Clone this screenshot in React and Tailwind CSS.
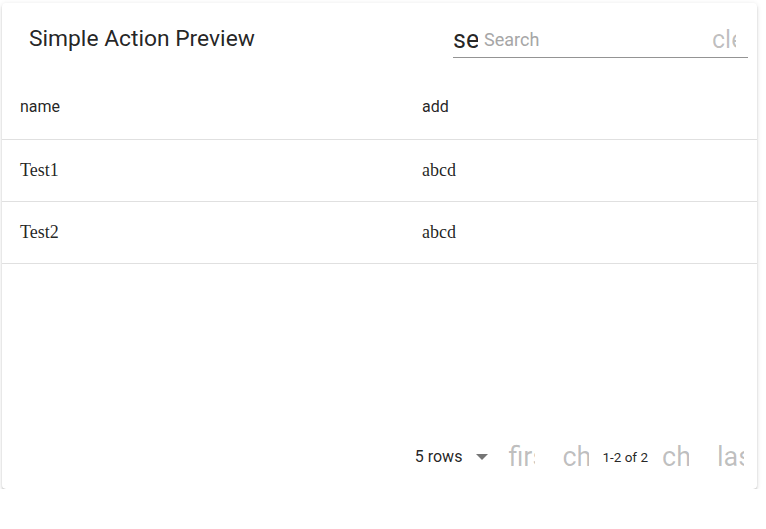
import React from 'react'

// rows shown in the preview table
const rows = [
  { name: "Test1", add: "abcd" },
  { name: "Test2", add: "abcd" },
]

// icon-font fallback: the ligature name shows, clipped to a 1em box
function LigIcon({ name, className = "" }) {
  return (
    <span className={`inline-block overflow-hidden whitespace-nowrap ${className}`}>
      {name}
    </span>
  )
}

export default function App() {
  return (
    <div className="pl-[2px] pt-[3px] font-['Roboto',sans-serif]">
      <div className="w-[755px] h-[486px] bg-white rounded-[4px] shadow-[0_3px_1px_-2px_rgba(0,0,0,0.25),0_2px_2px_0_rgba(0,0,0,0.16),0_1px_5px_0_rgba(0,0,0,0.12)] flex flex-col">

        {/* toolbar */}
        <div className="h-[72px] flex items-center pl-[27px] pr-[9px]">
          <h2 className="text-[22.8px] text-[rgba(0,0,0,0.87)] flex-1">Simple Action Preview</h2>
          <div className="w-[295px] h-[36px] flex items-center border-b border-[rgba(0,0,0,0.42)] mt-[2px]">
            <LigIcon name="search" className="w-[25px] h-[27px] text-[25px] leading-[27px] text-[rgba(0,0,0,0.87)]" />
            <span className="ml-[6px] text-[18px] text-[#a6a6a6] flex-1">Search</span>
            <LigIcon name="clear" className="w-[24px] h-[27px] text-[25px] leading-[27px] text-[rgba(0,0,0,0.26)] mr-[12px]" />
          </div>
        </div>

        {/* header */}
        <div className="grid grid-cols-[402px_1fr] h-[65px] items-center border-b border-[#e0e0e0] text-[16px] text-[rgba(0,0,0,0.87)]">
          <div className="pl-[18px]">name</div>
          <div className="pl-[18px]">add</div>
        </div>

        {/* body */}
        {rows.map((r, i) => (
          <div key={i} className="grid grid-cols-[402px_1fr] h-[62px] items-center border-b border-[#e0e0e0] font-['Liberation_Serif',serif] text-[18px] text-[rgba(0,0,0,0.87)]">
            <div className="pl-[18px]">{r.name}</div>
            <div className="pl-[18px]">{r.add}</div>
          </div>
        ))}

        <div className="flex-1" />

        {/* pagination */}
        <div className="h-[64px] mt-[2px] flex items-center justify-end pr-[13px]">
          <span className="text-[16px] text-[rgba(0,0,0,0.87)]">5 rows</span>
          <svg className="ml-[14px]" width="12" height="6" viewBox="0 0 10 5">
            <path d="M0 0l5 5 5-5z" fill="rgba(0,0,0,0.54)" />
          </svg>
          <LigIcon name="first_page" className="ml-[20px] w-[27px] h-[28px] text-[27px] leading-[28px] text-[rgba(0,0,0,0.26)]" />
          <LigIcon name="chevron_left" className="ml-[27px] w-[27px] h-[28px] text-[27px] leading-[28px] text-[rgba(0,0,0,0.26)]" />
          <span className="ml-[13px] text-[13.5px] text-[rgba(0,0,0,0.87)]">1-2 of 2</span>
          <LigIcon name="chevron_right" className="ml-[14px] w-[27px] h-[28px] text-[27px] leading-[28px] text-[rgba(0,0,0,0.26)]" />
          <LigIcon name="last_page" className="ml-[28px] w-[27px] h-[28px] text-[27px] leading-[28px] text-[rgba(0,0,0,0.26)]" />
        </div>
      </div>
    </div>
  )
}
